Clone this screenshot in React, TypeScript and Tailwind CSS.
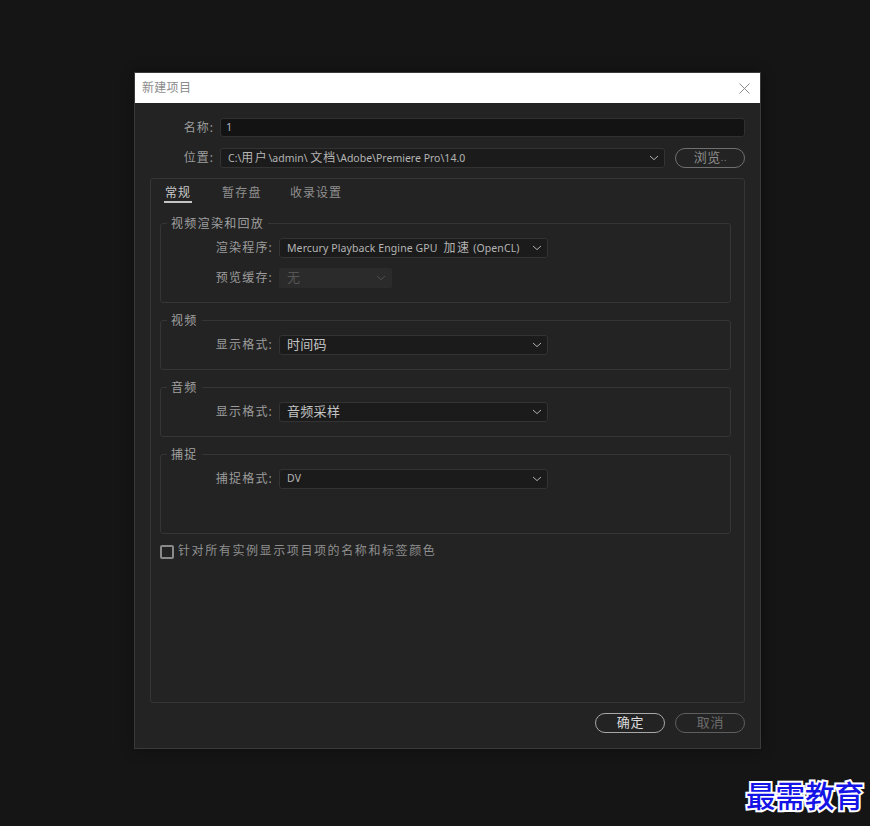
import React from "react";

const FONT = "font-['Noto_Sans','Noto_Sans_CJK_SC',sans-serif]";

function Chevron({ className = "text-[#b0b0b0]" }: { className?: string }) {
  return (
    <svg width="10" height="6" viewBox="0 0 10 6" fill="none" className={className}>
      <path d="M1 1 L5 4.6 L9 1" stroke="currentColor" strokeWidth="1" />
    </svg>
  );
}

function Select({ children, latin }: { children: React.ReactNode; latin?: boolean }) {
  return (
    <div className="flex h-[20px] w-[269px] items-center justify-between rounded-[3px] border border-[#333333] bg-[#1b1b1b] pl-[7px] pr-[5px]">
      <span className={latin ? "text-[10.5px] tracking-[0.1px] text-[#b4b4b4]" : "pb-[1px] text-[13px] tracking-[0.3px] text-[#c4c4c4]"}>{children}</span>
      <Chevron />
    </div>
  );
}

function Row({ label, children }: { label: string; children: React.ReactNode }) {
  return (
    <div className="flex items-center">
      <span className="w-[112px] pb-[1px] text-right text-[12px] leading-[18px] tracking-[1.2px] text-[#9c9c9c]">{label}</span>
      <span className="ml-[6px] flex">{children}</span>
    </div>
  );
}

function Group({ title, className, children }: { title: string; className: string; children: React.ReactNode }) {
  return (
    <div className={`relative rounded-[3px] border border-[#353535] pt-[14px] ${className}`}>
      <span className="absolute -top-[8px] left-[6px] bg-[#232323] px-[4px] text-[12px] leading-[16px] tracking-[1.3px] text-[#a0a0a0]">{title}</span>
      {children}
    </div>
  );
}

function Pill({ children, className }: { children: React.ReactNode; className: string }) {
  return (
    <div className={`flex h-[20px] w-[70px] items-center justify-center rounded-full border pb-[1px] pl-[1px] text-[13px] tracking-[0.8px] ${className}`}>
      {children}
    </div>
  );
}

export default function App() {
  return (
    <div className={`relative h-[826px] w-[870px] overflow-hidden bg-[#151515] pl-[134px] pt-[72px] ${FONT}`}>
      <div className="flex h-[677px] w-[627px] flex-col border border-[#3a3a3a] bg-[#232323] shadow-[0_0_12px_rgba(0,0,0,0.35)]">
        <div className="flex h-[30px] shrink-0 items-center justify-between bg-white pl-[7px] pr-[9px]">
          <span className="text-[12px] tracking-[0.3px] text-[#8a8a8a]">新建项目</span>
          <svg width="13" height="13" viewBox="0 0 13 13" fill="none">
            <path d="M1.5 1.5 L11.5 11.5 M11.5 1.5 L1.5 11.5" stroke="#8c8c8c" strokeWidth="1" />
          </svg>
        </div>

        <div className="flex flex-1 flex-col px-[15px] pt-[15px]">
          <div className="flex items-center">
            <span className="w-[64px] text-right text-[12px] leading-[19px] tracking-[1px] text-[#9c9c9c]">名称:</span>
            <div className="ml-[6px] flex h-[19px] w-[525px] items-center rounded-[3px] border border-[#303030] bg-[#131313] pl-[5px] text-[11px] text-[#a9b4c0]">
              1
            </div>
          </div>

          <div className="mt-[11px] flex items-center">
            <span className="w-[64px] pb-[1px] text-right text-[12px] leading-[18px] tracking-[1px] text-[#9c9c9c]">位置:</span>
            <div className="ml-[6px] flex h-[20px] w-[445px] items-center justify-between rounded-[3px] border border-[#333333] bg-[#1b1b1b] pl-[7px] pr-[5px]">
              <span className="pb-[1px] text-[10.5px] text-[#b4b4b4]">
                C:\<span className="text-[12px] tracking-[1.5px]">用户</span>\admin\ <span className="text-[12px] tracking-[1px]">文档</span>\Adobe\Premiere Pro\14.0
              </span>
              <Chevron />
            </div>
            <Pill className="ml-[10px] border-[#6f6f6f] text-[#8d8d8d]">
              <span className="tracking-[0.5px]">浏览</span>
              <span className="text-[9px] leading-none">..</span>
            </Pill>
          </div>

          <div className="mt-[10px] flex h-[525px] flex-col rounded-[3px] border border-[#353535] px-[9px]">
            <div className="flex h-[24px] items-start pl-[5px] pt-[5px] text-[12px] leading-[18px] tracking-[1px]">
              <span className="relative mr-[30px] text-[#c8c8c8]">
                常规
                <span className="absolute -bottom-[1px] -left-[1px] h-[2px] w-[28px] bg-[#c4c4c4]" />
              </span>
              <span className="mr-[28px] ml-[1px] tracking-[1.3px] text-[#8f8f8f]">暂存盘</span>
              <span className="text-[#8f8f8f]">收录设置</span>
            </div>

            <div className="mt-[20px] flex w-[571px] flex-col gap-[17px]">
              <Group title="视频渲染和回放" className="h-[80px]">
                <div className="flex flex-col gap-[10px]">
                  <Row label="渲染程序:">
                    <Select latin>
                      Mercury Playback Engine GPU <span className="ml-[3px] text-[12px] tracking-[1.5px]">加速</span> (OpenCL)
                    </Select>
                  </Row>
                  <Row label="预览缓存:">
                    <div className="flex h-[20px] w-[113px] items-center justify-between rounded-[2px] bg-[#2b2b2b] pl-[8px] pr-[6px] text-[13px] text-[#555555]">
                      <span className="pb-[1px]">无</span>
                      <Chevron className="text-[#4e4e4e]" />
                    </div>
                  </Row>
                </div>
              </Group>

              <Group title="视频" className="h-[50px]">
                <Row label="显示格式:"><Select>时间码</Select></Row>
              </Group>

              <Group title="音频" className="h-[50px]">
                <Row label="显示格式:"><Select>音频采样</Select></Row>
              </Group>

              <Group title="捕捉" className="h-[80px]">
                <Row label="捕捉格式:"><Select latin>DV</Select></Row>
              </Group>
            </div>

            <div className="mt-[9px] flex items-center">
              <span className="h-[14px] w-[14px] rounded-[2px] border-2 border-[#8a8a8a]" />
              <span className="ml-[4px] pb-[2px] text-[12px] leading-[16px] tracking-[1.6px] text-[#8f8f8f]">针对所有实例显示项目项的名称和标签颜色</span>
            </div>
          </div>

          <div className="mt-[10px] flex justify-end gap-[10px]">
            <Pill className="border-[#a8a8a8] text-[#dcdcdc]">确定</Pill>
            <Pill className="border-[#5e5e5e] text-[#6e6e6e]">取消</Pill>
          </div>
        </div>
      </div>

      <span className="absolute left-[746px] top-[775px] font-['Noto_Sans_CJK_SC',sans-serif] text-[29.5px] font-medium leading-[38px] text-[#1414e6] [-webkit-text-stroke:4px_white] [paint-order:stroke_fill]">
        最需教育
      </span>
    </div>
  );
}
